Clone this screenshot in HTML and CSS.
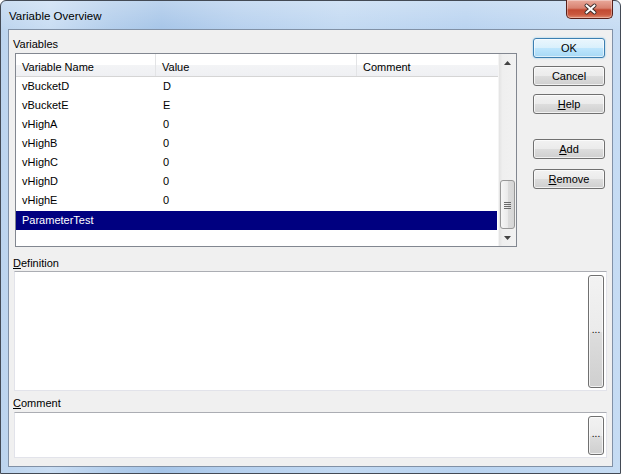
FILE: index.html
```html
<!DOCTYPE html>
<html>
<head>
<meta charset="utf-8">
<link rel="stylesheet" href="styles.css">
</head>
<body>
<div class="window">
  <div class="titlebar">
    <span class="title">Variable Overview</span>
    <div class="close">
      <svg width="47" height="18" viewBox="0 0 47 18">
        <path d="M19.5 5.5 L27.5 12.5 M27.5 5.5 L19.5 12.5" stroke="#3a2a28" stroke-width="4" stroke-linecap="round" fill="none"/>
        <path d="M19.5 5.5 L27.5 12.5 M27.5 5.5 L19.5 12.5" stroke="#ffffff" stroke-width="2.2" stroke-linecap="round" fill="none"/>
      </svg>
    </div>
  </div>
  <div class="client">
    <div class="top">
      <div class="left">
        <div class="label vars">Variables</div>
        <div class="list">
          <div class="listmain">
            <div class="header">
              <div class="c1 hcell">Variable Name</div>
              <div class="c2 hcell">Value</div>
              <div class="c3 hcell">Comment</div>
            </div>
            <div class="row"><div class="c1">vBucketD</div><div class="c2">D</div><div class="c3"></div></div>
            <div class="row"><div class="c1">vBucketE</div><div class="c2">E</div><div class="c3"></div></div>
            <div class="row"><div class="c1">vHighA</div><div class="c2">0</div><div class="c3"></div></div>
            <div class="row"><div class="c1">vHighB</div><div class="c2">0</div><div class="c3"></div></div>
            <div class="row"><div class="c1">vHighC</div><div class="c2">0</div><div class="c3"></div></div>
            <div class="row"><div class="c1">vHighD</div><div class="c2">0</div><div class="c3"></div></div>
            <div class="row"><div class="c1">vHighE</div><div class="c2">0</div><div class="c3"></div></div>
            <div class="row selected"><div class="c1">ParameterTest</div><div class="c2"></div><div class="c3"></div></div>
          </div>
          <div class="vscroll">
            <div class="arrow"><svg width="17" height="17" viewBox="0 0 17 17"><path d="M5 11 L12 11 L8.5 7 Z" fill="#444"/></svg></div>
            <div class="track">
              <div class="thumb">
                <svg width="7" height="8" viewBox="0 0 7 8"><path d="M0 1.5H7M0 3.5H7M0 5.5H7M0 7.5H7" stroke="#6a6a6a" stroke-width="1"/></svg>
              </div>
            </div>
            <div class="arrow"><svg width="17" height="17" viewBox="0 0 17 17"><path d="M5 7 L12 7 L8.5 11 Z" fill="#444"/></svg></div>
          </div>
        </div>
      </div>
      <div class="buttons">
        <div class="btn default">OK</div>
        <div class="btn gap8">Cancel</div>
        <div class="btn gap8"><u>H</u>elp</div>
        <div class="btn gap25"><u>A</u>dd</div>
        <div class="btn gap10"><u>R</u>emove</div>
      </div>
    </div>
    <div class="label def"><u>D</u>efinition</div>
    <div class="box defbox"><div class="dots tall">...</div></div>
    <div class="label com"><u>C</u>omment</div>
    <div class="box combox"><div class="dots short">...</div></div>
  </div>
</div>
</body>
</html>
```
FILE: styles.css
```css
html, body {
  margin: 0;
  padding: 0;
  background: #ffffff;
}
body {
  font-family: "Liberation Sans", Arial, sans-serif;
  font-size: 11px;
  color: #000;
}
.window {
  width: 621px;
  height: 474px;
  box-sizing: border-box;
  border: 1px solid #434a55;
  border-radius: 6px 6px 0 0;
  background:
    linear-gradient(180deg, rgba(255,255,255,0.25) 0px, rgba(255,255,255,0) 30px),
    linear-gradient(90deg, #bcd4ee 0%, #c9ddf3 8%, #b2cdeb 18%, #a6c5e8 26%, #b6d0ee 38%, #c2d9f2 55%, #b9d3f0 75%, #c6dcf3 100%);
  padding: 0 7px 6px 7px;
  display: flex;
  flex-direction: column;
}
.titlebar {
  height: 28px;
  display: flex;
  justify-content: space-between;
  align-items: flex-start;
}
.title {
  font-family: "Liberation Sans", Arial, sans-serif;
  font-size: 11.5px;
  margin-top: 9px;
  margin-left: 1px;
  color: #000;
}
.close {
  width: 47px;
  height: 19px;
  box-sizing: border-box;
  margin-top: -1px;
  border: 1px solid #58201a;
  border-top: none;
  border-radius: 0 0 5px 5px;
  background: linear-gradient(180deg, #e9a99b 0%, #d88270 45%, #c24a32 55%, #c9583e 80%, #e08a6e 100%);
  box-shadow: inset 0 0 0 1px rgba(255,255,255,0.35);
}
.close svg { display: block; }
.client {
  flex: 1;
  box-sizing: border-box;
  border: 1px solid #8191a6;
  background: #f0f0f0;
  padding: 7px 0 0 0;
  display: flex;
  flex-direction: column;
}
.top {
  display: flex;
  align-items: flex-start;
}
.left {
  margin-left: 6px;
  width: 502px;
}
.label {
  line-height: 14px;
}
.vars {
  margin-left: -2px;
  height: 14px;
  padding-bottom: 2px;
}
.list {
  width: 502px;
  height: 194px;
  box-sizing: border-box;
  border: 1px solid #828790;
  background: #fff;
  display: flex;
}
.listmain {
  width: 483px;
  overflow: hidden;
}
.header {
  display: flex;
  height: 22px;
  border-bottom: 1px solid #d5d5d5;
  background: linear-gradient(180deg, #ffffff 0%, #ffffff 50%, #f3f4f6 51%, #eff0f3 100%);
}
.hcell {
  padding-top: 6px;
  line-height: 14px;
  box-sizing: border-box;
}
.c1, .c2, .c3 {
  padding-left: 6px;
  box-sizing: border-box;
  white-space: nowrap;
}
.c1 { width: 140px; }
.c2 { width: 201px; }
.c3 { flex: 1; }
.header .c1, .header .c2 {
  border-right: 1px solid #e3e4e6;
}
.row {
  display: flex;
  height: 19px;
  line-height: 18px;
}
.row .c1 { padding-left: 6px; }
.row .c2 { padding-left: 7px; }
.selected {
  background: #000080;
  color: #fff;
  margin-top: 1px;
  margin-right: 1px;
}
.vscroll {
  width: 17px;
  display: flex;
  flex-direction: column;
  background: linear-gradient(90deg, #e3e3e3 0%, #efefef 20%, #f2f2f2 100%);
  border-left: 1px solid #f4f4f4;
}
.arrow {
  height: 17px;
}
.arrow svg { display: block; }
.track {
  flex: 1;
  display: flex;
  flex-direction: column;
  justify-content: flex-end;
  align-items: center;
}
.thumb {
  width: 15px;
  height: 49px;
  box-sizing: border-box;
  border: 1px solid #979797;
  border-radius: 3px;
  background: linear-gradient(90deg, #f6f6f6 0%, #eaeaea 50%, #dcdcdc 51%, #d6d6d6 100%);
  display: flex;
  align-items: center;
  justify-content: center;
}
.thumb svg { display: block; }
.buttons {
  margin-left: 16px;
  margin-top: 1px;
  width: 72px;
  display: flex;
  flex-direction: column;
}
.btn {
  height: 20px;
  box-sizing: border-box;
  border: 1px solid #707070;
  border-radius: 3px;
  background: linear-gradient(180deg, #f2f2f2 0%, #ebebeb 50%, #dddddd 51%, #cfcfcf 100%);
  box-shadow: inset 0 0 0 1px rgba(255,255,255,0.7);
  text-align: center;
  line-height: 18px;
}
.btn.default {
  border-color: #3c7fb1;
  background: linear-gradient(180deg, #eaf6fd 0%, #d9f0fc 50%, #bee6fd 51%, #a7d9f5 100%);
  box-shadow: inset 0 0 0 1px rgba(255,255,255,0.6), 0 0 2px #7ec4ea;
}
.gap8 { margin-top: 8px; }
.gap25 { margin-top: 25px; }
.gap10 { margin-top: 10px; }
u { text-decoration: underline; text-underline-offset: 1px; }
.def {
  margin-left: 4px;
  padding-top: 9px;
  padding-bottom: 1px;
}
.com {
  margin-left: 4px;
  padding-top: 5px;
  padding-bottom: 2px;
}
.box {
  margin-left: 5px;
  width: 593px;
  box-sizing: border-box;
  background: #fff;
  border: 1px solid #e2e3ea;
  border-top-color: #abadb3;
  display: flex;
  justify-content: flex-end;
  align-items: flex-start;
  padding: 3px 2px 0 0;
}
.defbox { height: 120px; }
.combox { height: 46px; }
.dots {
  width: 16px;
  box-sizing: border-box;
  border: 1px solid #707070;
  border-radius: 3px;
  background: linear-gradient(180deg, #f2f2f2 0%, #ebebeb 50%, #dddddd 51%, #cfcfcf 100%);
  box-shadow: inset 0 0 0 1px rgba(255,255,255,0.7);
  text-align: center;
  display: flex;
  align-items: center;
  justify-content: center;
  font-size: 10px;
  line-height: 10px;
  padding-bottom: 4px;
}
.tall { height: 113px; }
.short { height: 39px; }
```
